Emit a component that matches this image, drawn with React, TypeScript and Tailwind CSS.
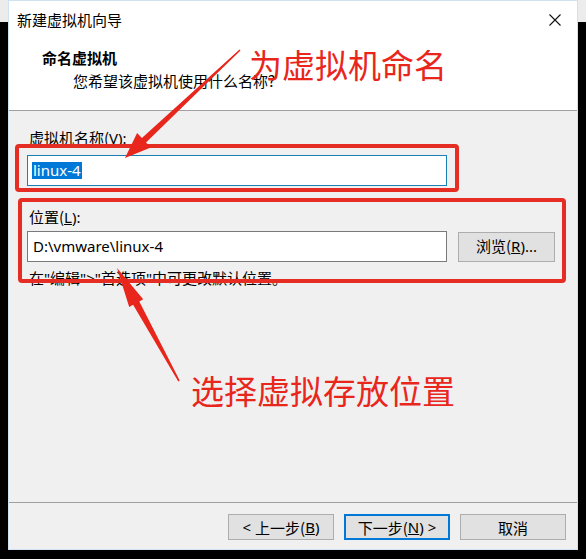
import React from "react";

const FONT = '"Noto Sans", "Noto Sans CJK SC", sans-serif';
const CJK = '"Noto Sans CJK SC", "Noto Sans", sans-serif';

function Btn({ children, primary = false, w }: { children: React.ReactNode; primary?: boolean; w: string }) {
  return (
    <div
      className={`${w} h-[26px] flex items-center justify-center text-[15px] leading-none text-black bg-[#e1e1e1] ${
        primary ? "border-2 border-[#0078d7]" : "border border-[#adadad]"
      }`}
    >
      {children}
    </div>
  );
}

export default function App() {
  return (
    <div
      className="relative w-[586px] h-[559px] overflow-hidden bg-[linear-gradient(to_bottom,#ececec_22px,#000_22px)]"
      style={{ fontFamily: FONT }}
    >
      {/* window */}
      <div className="ml-[8px] w-[570px] h-[550px] border border-[#cfe2f3] bg-[#f0f0f0] flex flex-col">
        {/* header */}
        <div className="h-[110px] bg-white border-b border-[#a0a0a0] flex flex-col">
          <div className="h-[37px] flex items-center justify-between pl-[8px] pr-[16px]">
            <span className="text-[15px] leading-none text-black" style={{ fontFamily: CJK }}>
              新建虚拟机向导
            </span>
            <svg width="12" height="12" viewBox="0 0 12 12" className="mt-[1px]">
              <path d="M0.5 0.5 L11.5 11.5 M11.5 0.5 L0.5 11.5" stroke="#111" strokeWidth="1.1" />
            </svg>
          </div>
          <div
            className="ml-[33px] mt-[10px] h-[20px] flex items-center text-[15px] font-bold text-black"
            style={{ fontFamily: CJK }}
          >
            命名虚拟机
          </div>
          <div
            className="ml-[64px] mt-[3px] h-[20px] flex items-center text-[15px] text-black"
            style={{ fontFamily: CJK }}
          >
            您希望该虚拟机使用什么名称?
          </div>
        </div>

        {/* body */}
        <div className="flex-1 flex flex-col pl-[18px] pt-[17px]">
          <div className="ml-[2px] h-[20px] flex items-center text-[15px] text-black">
            <span style={{ fontFamily: CJK }}>虚拟机名称(</span>
            <span className="underline">V</span>
            <span>):</span>
          </div>
          <div className="mt-[7px] w-[420px] h-[31px] bg-white border border-[#1a7fb5] flex items-center pl-[4px]">
            <span className="bg-[#0078d7] text-white text-[15px] leading-[17px] px-[1px]">linux-4</span>
          </div>

          <div className="mt-[21px] ml-[2px] h-[20px] flex items-center text-[15px] text-black">
            <span style={{ fontFamily: CJK }}>位置(</span>
            <span className="underline">L</span>
            <span>):</span>
          </div>
          <div className="mt-[4px] flex items-center gap-[11px]">
            <div className="w-[420px] h-[31px] bg-white border border-[#7a7a7a] flex items-center pl-[5px] text-[15px] text-black">
              D:\vmware\linux-4
            </div>
            <div className="w-[97px] h-[30px] bg-[#e1e1e1] border border-[#adadad] flex items-center justify-center text-[15px] text-black">
              <span style={{ fontFamily: CJK }}>浏览(</span>
              <span className="underline">R</span>
              <span>)...</span>
            </div>
          </div>
          <div className="mt-[6px] ml-[2px] h-[20px] flex items-center text-[15px] text-black whitespace-pre">
            在"编辑"&gt;"首选项"中可更改默认位置。
          </div>
        </div>

        {/* footer */}
        <div className="h-[47px] border-t border-[#a0a0a0] flex items-start justify-end gap-[10px] pr-[11px] pt-[11px]">
          <Btn w="w-[106px]">
            <span className="whitespace-pre">{"< "}</span>
            <span style={{ fontFamily: CJK }}>上一步(</span>
            <span className="underline">B</span>
            <span>)</span>
          </Btn>
          <Btn w="w-[106px]" primary>
            <span style={{ fontFamily: CJK }}>下一步(</span>
            <span className="underline">N</span>
            <span className="whitespace-pre">{") >"}</span>
          </Btn>
          <Btn w="w-[106px]">
            <span style={{ fontFamily: CJK }}>取消</span>
          </Btn>
        </div>
      </div>

      {/* annotations */}
      <div className="absolute left-[15px] top-[144px] w-[444px] h-[48px] border-4 border-[#e52d24] rounded-[4px] pointer-events-none" />
      <div className="absolute left-[18px] top-[198px] w-[548px] h-[85px] border-4 border-[#e52d24] rounded-[4px] pointer-events-none" />

      <div
        className="absolute left-[249px] top-[44px] text-[33px] leading-[40px] text-[#e8261c] whitespace-nowrap"
        style={{ fontFamily: CJK }}
      >
        为虚拟机命名
      </div>
      <div
        className="absolute left-[191px] top-[370px] text-[33px] leading-[40px] text-[#e8261c] whitespace-nowrap"
        style={{ fontFamily: CJK }}
      >
        选择虚拟存放位置
      </div>

      <svg className="absolute left-0 top-0 pointer-events-none" width="586" height="559" viewBox="0 0 586 559">
        <polygon
          points="240.5,50.5 146,142.4 150.8,147.5 125,158 137.1,132.9 141.9,138 239.5,49.5"
          fill="#e8261c"
        />
        <polygon
          points="179.7,380.6 139.3,301.4 143.2,299.3 117,268 129.2,306.9 133.1,304.8 178.3,381.4"
          fill="#e8261c"
        />
      </svg>
    </div>
  );
}
